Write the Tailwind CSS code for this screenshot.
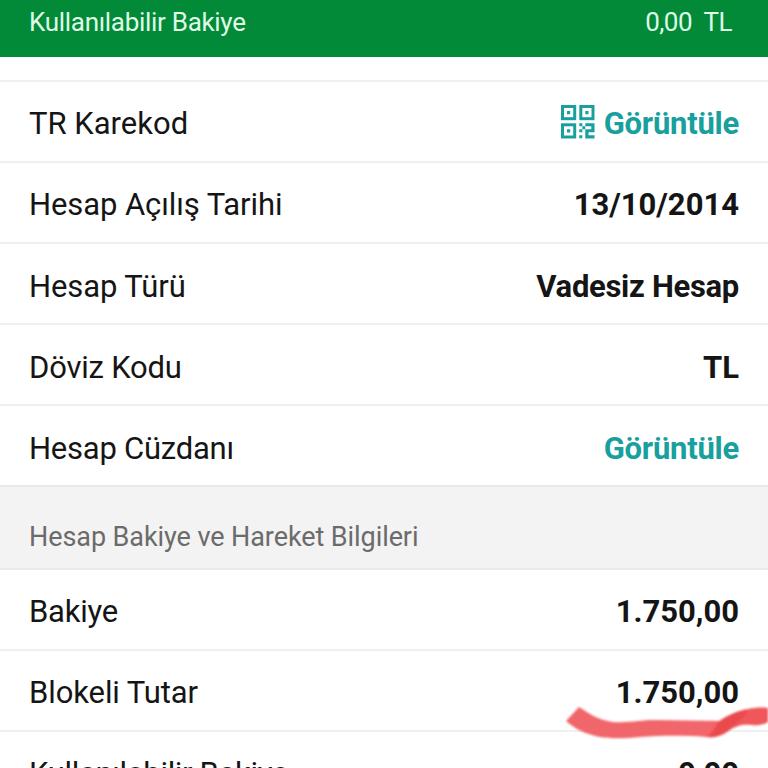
<!DOCTYPE html>
<html lang="tr">
  <head>
    <meta charset="UTF-8" />
    <meta name="viewport" content="width=device-width, initial-scale=1.0" />
    <title>Hesap Detayı</title>
    <script src="https://cdn.jsdelivr.net/npm/@tailwindcss/browser@4"></script>
  </head>
  <body class="bg-white">
    <div class="relative w-[768px] h-[768px] overflow-hidden bg-white text-[#151515] font-['Roboto',sans-serif] text-[31px] leading-9">
      <header class="flex justify-between h-[57px] pl-[29px] pr-9 pt-1 bg-[#028a39] text-[#dffbe6] text-[26px]">
        <span class="tracking-[-0.3px]">Kullanılabilir Bakiye</span>
        <span class="whitespace-pre tracking-[-0.5px]">0,00  TL</span>
      </header>

      <!-- Account details -->
      <section class="pt-[23px]">
        <div class="flex items-center justify-between h-[81px] px-[29px] pt-1 border-t-2 border-[#f0f0f0]">
          <span>TR Karekod</span>
          <span class="flex items-center gap-[9px] font-bold text-[#1a9f9f]">
            <svg class="w-[34px] h-[34px] -mt-1" viewBox="0 0 34 34" fill="currentColor">
              <g fill="none" stroke="currentColor" stroke-width="3">
                <rect x="1.5" y="1.5" width="12.2" height="12.2" />
                <rect x="19.8" y="1.5" width="12.2" height="12.2" />
                <rect x="1.5" y="19.8" width="12.2" height="12.2" />
              </g>
              <path d="M6 6h3.2v3.2h-3.2zM24.3 6h3.2v3.2h-3.2zM6 24.3h3.2v3.2h-3.2z" />
              <path d="M18.3 18.3h3v3h-3zM21.3 21.3h3v3h-3zM18.3 24.3h3v3h-3zM18.3 30.3h3v3h-3z" />
              <path d="M24.3 18.3h9.2v9h-6v3h6v3.2h-9.2v-9.2h6v-3h-6z" />
            </svg>
            <span class="tracking-[-0.25px]">Görüntüle</span>
          </span>
        </div>
        <div class="flex items-center justify-between h-[81px] px-[29px] pt-1 border-t-2 border-[#f0f0f0]">
          <span class="tracking-[-0.1px]">Hesap Açılış Tarihi</span>
          <span class="font-bold">13/10/2014</span>
        </div>
        <div class="flex items-center justify-between h-[81px] px-[29px] pt-1.5 border-t-2 border-[#f0f0f0]">
          <span class="tracking-[-0.1px]">Hesap Türü</span>
          <span class="font-bold tracking-[-0.3px]">Vadesiz Hesap</span>
        </div>
        <div class="flex items-center justify-between h-[81px] px-[29px] pt-1.5 border-t-2 border-[#f0f0f0]">
          <span class="tracking-[-0.2px]">Döviz Kodu</span>
          <span class="font-bold">TL</span>
        </div>
        <div class="flex items-center justify-between h-[81px] px-[29px] pt-1.5 border-t-2 border-[#f0f0f0]">
          <span class="tracking-[-0.25px]">Hesap Cüzdanı</span>
          <span class="font-bold text-[#1a9f9f] tracking-[-0.25px]">Görüntüle</span>
        </div>
      </section>

      <h2 class="h-[83px] pl-[29px] pt-8 border-t-2 border-[#e9e9e9] bg-[#f3f3f3] text-[#6b6b6b] text-[27px] tracking-[-0.08px]">Hesap Bakiye ve Hareket Bilgileri</h2>

      <!-- Balances -->
      <section>
        <div class="flex items-center justify-between h-[81px] px-[29px] pt-1 border-t-2 border-[#e9e9e9]">
          <span class="tracking-[-0.25px]">Bakiye</span>
          <span class="font-bold">1.750,00</span>
        </div>
        <div class="flex items-center justify-between h-[81px] px-[29px] pt-1 border-t-2 border-[#f0f0f0]">
          <span class="tracking-[-0.1px]">Blokeli Tutar</span>
          <span class="font-bold">1.750,00</span>
        </div>
        <div class="flex items-center justify-between h-[81px] px-[29px] pt-1 border-t-2 border-[#f0f0f0]">
          <span class="tracking-[-0.33px]">Kullanılabilir Bakiye</span>
          <span class="font-bold">0,00</span>
        </div>
      </section>

      <!-- Red marker stroke under the blocked amount -->
      <svg class="absolute left-[560px] top-[700px] w-[208px] h-[48px] blur-[1px]" viewBox="560 700 208 48">
        <path fill="#f1666a" d="M579 707C590 714 598 720 613 722C630 723 640 720 655 720L724 721L722 730C717 735 714 737 706 737C680 735 660 736 640 737C622 739 603 739 592 735C581 732 573 727 566 721Z" />
        <path fill="#f0575a" d="M720 722C730 715 738 710 748 709C757 707 764 707 776 709V716C766 725 760 726 752 725C742 724 736 726 730 730C722 736 716 738 706 737Z" />
        <path fill="#ea4a4d" d="M718 722C730 714 738 710 748 711C743 719 735 724 728 730C721 735 715 738 709 737C714 731 716 726 718 722Z" />
      </svg>
    </div>
  </body>
</html>
